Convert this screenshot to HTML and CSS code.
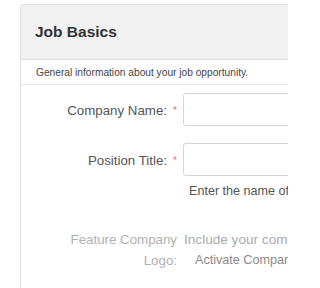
FILE: index.html
```html
<!DOCTYPE html>
<html>
<head>
<meta charset="utf-8">
<link rel="stylesheet" href="styles.css">
</head>
<body>
<div class="panel">
  <div class="panel-head">Job Basics</div>
  <div class="panel-desc">General information about your job opportunity.</div>
  <div class="panel-body">
    <div class="form-row">
      <label class="label"><span>Company Name:</span><span class="req">*</span></label>
      <div class="field"><input class="input" type="text"></div>
    </div>
    <div class="form-row row-gap">
      <label class="label"><span>Position Title:</span><span class="req">*</span></label>
      <div class="field"><input class="input" type="text"></div>
    </div>
    <div class="help">Enter the name of the position.</div>
    <div class="form-row feature">
      <label class="label muted">Feature Company<br>Logo:</label>
      <div class="field feature-field">
        <div class="feature-line">Include your company logo.</div>
        <div class="feature-line activate">Activate Company Logo</div>
      </div>
    </div>
  </div>
</div>
</body>
</html>
```
FILE: styles.css
```css
html, body {
  margin: 0;
  width: 288px;
  height: 288px;
  overflow: hidden;
  background: #fff;
}
body {
  padding: 4px 0 0 20px;
  box-sizing: border-box;
  font-family: "Liberation Sans", Arial, sans-serif;
}
.panel {
  width: 268px;
  height: 284px;
  border: 1px solid #e3e3e3;
  border-right: 0;
  border-bottom: 0;
  border-radius: 4px 0 0 0;
  box-sizing: border-box;
  overflow: hidden;
}
.panel-head {
  height: 54px;
  background: #f1f1f1;
  border-bottom: 1px solid #dedede;
  border-radius: 3px 0 0 0;
  display: flex;
  align-items: center;
  padding-left: 14px;
  font-size: 15.5px;
  font-weight: bold;
  color: #333;
}
.panel-desc {
  height: 24px;
  border-bottom: 1px solid #e6e6e6;
  display: flex;
  align-items: center;
  padding-left: 15px;
  font-size: 10.2px;
  color: #444;
  white-space: nowrap;
  overflow: hidden;
}
.panel-body {
  padding-top: 8px;
}
.form-row {
  display: flex;
  align-items: center;
}
.row-gap {
  margin-top: 17px;
}
.label {
  width: 156px;
  flex: none;
  display: flex;
  justify-content: flex-end;
  align-items: center;
  padding-top: 2px;
  box-sizing: border-box;
  font-size: 13.3px;
  color: #555;
}
.req {
  display: inline-block;
  width: 10px;
  text-align: right;
  font-size: 10px;
  color: #e2707e;
}
.field {
  margin-left: 6px;
  flex: 1;
  min-width: 0;
  overflow: hidden;
}
.input {
  display: block;
  width: 200px;
  height: 33px;
  box-sizing: border-box;
  border: 1px solid #d6d6d6;
  border-radius: 3px;
  background: #fff;
  margin: 0;
}
.help {
  margin-top: 7px;
  padding-left: 168px;
  font-size: 12.6px;
  line-height: 16px;
  color: #555;
  white-space: nowrap;
  overflow: hidden;
}
.feature {
  margin-top: 30px;
  align-items: flex-start;
}
.muted {
  display: block;
  text-align: right;
  padding-top: 0;
  line-height: 21px;
  color: #b0b0b0;
}
.feature-field {
  font-size: 13.3px;
  line-height: 21px;
  white-space: nowrap;
}
.feature-line {
  padding-left: 1px;
  font-size: 13.6px;
  color: #ababab;
}
.activate {
  padding-left: 12px;
  font-size: 12.6px;
  color: #8a8a8a;
}
```
